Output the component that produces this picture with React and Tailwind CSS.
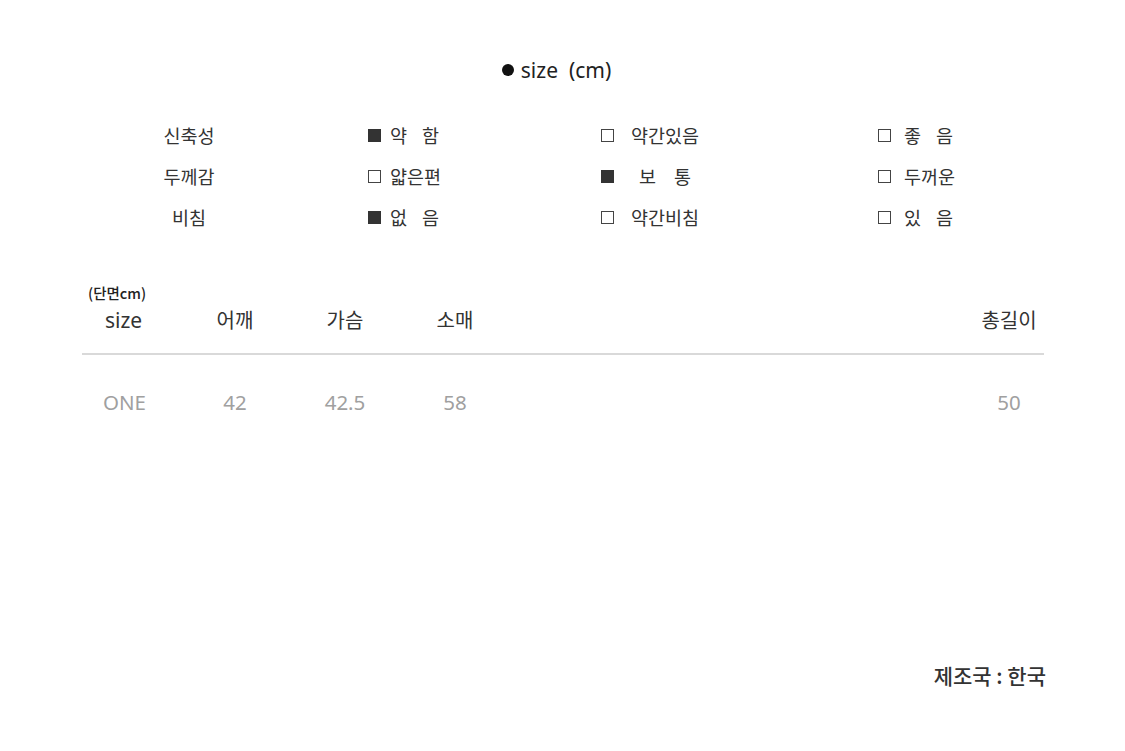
import React from 'react';

const KR = { fontFamily: '"Noto Sans CJK KR", "Noto Sans", sans-serif' };
const LAT = { fontFamily: '"Noto Sans", "Noto Sans CJK KR", sans-serif' };

// small checkbox square, filled when checked
const Box = ({ on }) => (
    <span
        className={`inline-block w-[13px] h-[13px] shrink-0 ${on ? 'bg-[#333333]' : 'border border-[#444444] bg-white'}`}
    />
);

// parts: one word, or two syllables spread apart
const Opt = ({ on, parts, gap, spread }) => (
    <div className="flex items-center">
        <Box on={on} />
        <span className={`${gap} flex ${spread}`}>
            {parts.map((p) => (
                <span key={p}>{p}</span>
            ))}
        </span>
    </div>
);

const rows = [
    {
        label: '신축성',
        opts: [
            [true, ['약', '함'], 'ml-[9px]', 'gap-[15px]'],
            [false, ['약간있음'], 'ml-[17px]', ''],
            [false, ['좋', '음'], 'ml-[13px]', 'gap-[15px]'],
        ],
    },
    {
        label: '두께감',
        opts: [
            [false, ['얇은편'], 'ml-[9px]', ''],
            [true, ['보', '통'], 'ml-[25px]', 'gap-[18px]'],
            [false, ['두꺼운'], 'ml-[13px]', ''],
        ],
    },
    {
        label: '비침',
        opts: [
            [true, ['없', '음'], 'ml-[9px]', 'gap-[15px]'],
            [false, ['약간비침'], 'ml-[17px]', ''],
            [false, ['있', '음'], 'ml-[13px]', 'gap-[15px]'],
        ],
    },
];

export default function App() {
    return (
        <div className="w-[1125px] h-[751px] bg-white text-[#333333] overflow-hidden" style={KR}>
            {/* title */}
            <div className="pt-[56px] flex justify-center items-center leading-[28px] text-[21px] text-[#222222]">
                <span className="inline-block w-[12px] h-[12px] rounded-full bg-[#111111] mr-[7px] ml-[-12px]" />
                <span className="whitespace-pre" style={LAT}>size  (cm)</span>
            </div>

            {/* fabric attributes */}
            <div className="mt-[31px] pl-[150px] text-[18.5px]">
                {rows.map((r) => (
                    <div key={r.label} className="grid grid-cols-[218px_233px_277px_1fr] h-[41px] items-center">
                        <div className="w-[78px] text-center">{r.label}</div>
                        {r.opts.map(([on, parts, g, s], i) => (
                            <Opt key={i} on={on} parts={parts} gap={g} spread={s} />
                        ))}
                    </div>
                ))}
            </div>

            {/* size table */}
            <div className="ml-[82px] w-[962px] mt-[47px]">
                <div className="pl-[6px] text-[14.5px] leading-[16px] font-medium text-[#222222]">(단면cm)</div>
                <div className="mt-[5px] grid grid-cols-[98px_110px_110px_110px_1fr_70px] leading-[28px] text-[20px] pb-[19px] border-b-2 border-[#d9d9d9]">
                    <div className="pl-[23px] text-[21px]" style={LAT}>size</div>
                    <div className="text-center">어깨</div>
                    <div className="text-center">가슴</div>
                    <div className="text-center">소매</div>
                    <div />
                    <div className="text-center">총길이</div>
                </div>
                <div
                    className="mt-[33px] grid grid-cols-[98px_110px_110px_110px_1fr_70px] leading-[28px] text-[20.5px] text-[#a0a0a0]"
                    style={LAT}
                >
                    <div className="pl-[21px]">ONE</div>
                    <div className="text-center">42</div>
                    <div className="text-center">42.5</div>
                    <div className="text-center">58</div>
                    <div />
                    <div className="text-center">50</div>
                </div>
            </div>

            {/* origin */}
            <div className="mt-[245px] pr-[79px] text-right text-[21px] leading-[28px] font-medium text-[#333333] whitespace-pre">
                제조국 : 한국
            </div>
        </div>
    );
}
